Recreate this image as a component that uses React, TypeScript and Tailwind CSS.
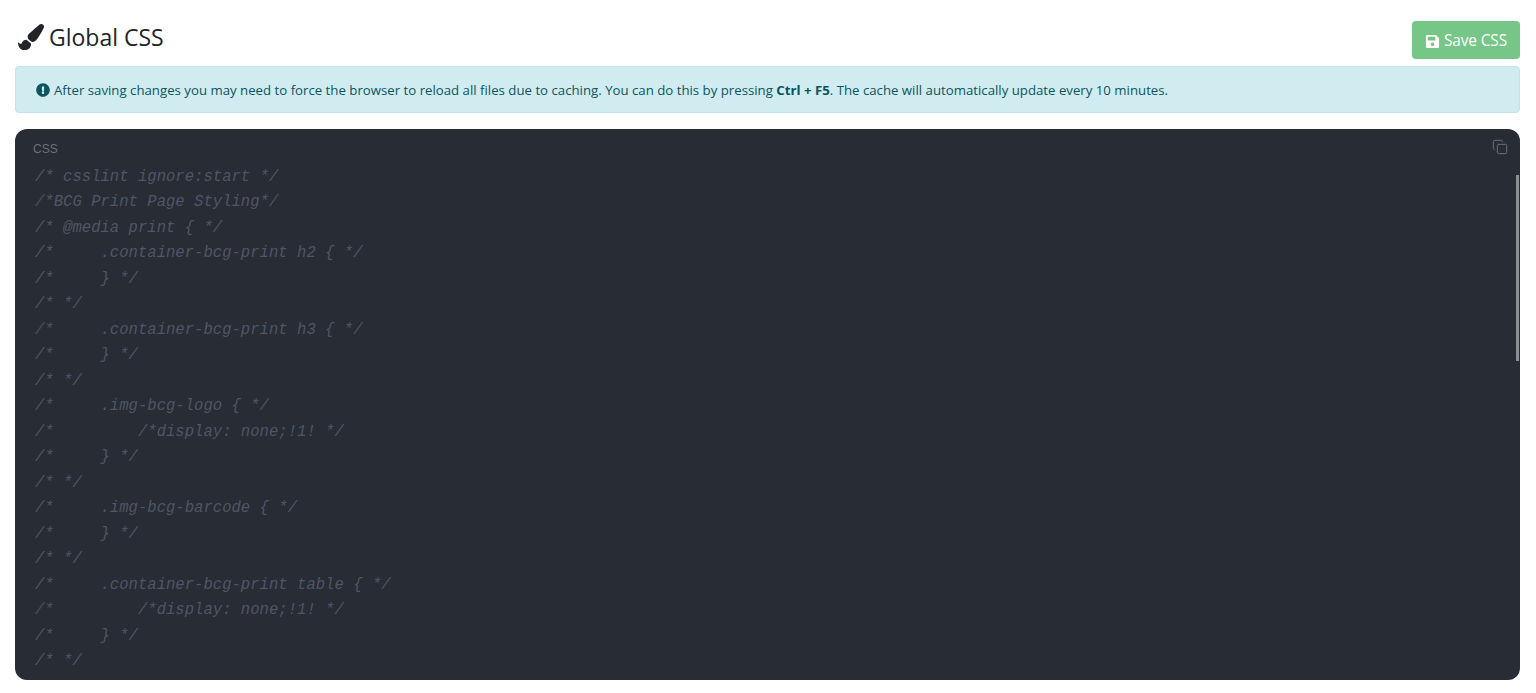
import { FaExclamationCircle, FaPaintBrush, FaSave } from 'react-icons/fa'
import { Copy } from 'lucide-react'

const lines = [
  '/* csslint ignore:start */',
  '/*BCG Print Page Styling*/',
  '/* @media print { */',
  '/*     .container-bcg-print h2 { */',
  '/*     } */',
  '/* */',
  '/*     .container-bcg-print h3 { */',
  '/*     } */',
  '/* */',
  '/*     .img-bcg-logo { */',
  '/*         /*display: none;!1! */',
  '/*     } */',
  '/* */',
  '/*     .img-bcg-barcode { */',
  '/*     } */',
  '/* */',
  '/*     .container-bcg-print table { */',
  '/*         /*display: none;!1! */',
  '/*     } */',
  '/* */',
]

export default function App() {
  return (
    <div className="h-[693px] overflow-hidden bg-white pl-[15px] pr-[16px] pt-[21px] font-['Open_Sans',sans-serif]">
      <div className="flex h-[38px] items-start justify-between">
        <h1 className="flex h-[32px] items-center text-[23px] text-[#212529]">
          <FaPaintBrush className="mr-[4px] ml-[2px] h-[26px] w-[28px] text-[#212529]" />
          Global CSS
        </h1>
        <button className="flex h-[38px] w-[108px] items-center justify-center rounded-[4px] bg-[#75c687] pt-[2px] text-[15.4px] tracking-[-0.1px] text-white">
          <FaSave className="mr-[4px] h-[15px] w-[15px]" />
          Save CSS
        </button>
      </div>

      <div className="mt-[7px] flex h-[47px] items-center rounded-[4px] border border-[#bee5eb] bg-[#d1ecf1] pl-[20px] text-[13.22px] text-[#0c5460]">
        <FaExclamationCircle className="mr-[4px] h-[14px] w-[14px] shrink-0 text-[#0c5460]" />
        <span className="pt-[2px]">
          After saving changes you may need to force the browser to reload all files due to caching. You can do this by pressing <b>Ctrl + F5</b>. The cache will automatically update every 10 minutes.
        </span>
      </div>

      <div className="relative mt-[16px] h-[551px] overflow-hidden rounded-[12px] bg-[#282c34] pl-[18px] pt-[12px]">
        <div className="font-['Liberation_Sans',sans-serif] text-[12px] leading-[16px] text-[#6c7079]">CSS</div>
        <Copy className="absolute right-[12px] top-[10px] h-[16px] w-[16px] text-[#6c7079]" strokeWidth={1.5} />
        <div className="absolute right-[1px] top-[46px] h-[186px] w-[3px] bg-[#8b8e93]" />
        <pre className="mt-[7.5px] pl-[2px] font-['Liberation_Mono',monospace] text-[15.6px] italic leading-[25.5px] text-[#4f5666]">
          {lines.join('\n')}
        </pre>
      </div>
    </div>
  )
}
